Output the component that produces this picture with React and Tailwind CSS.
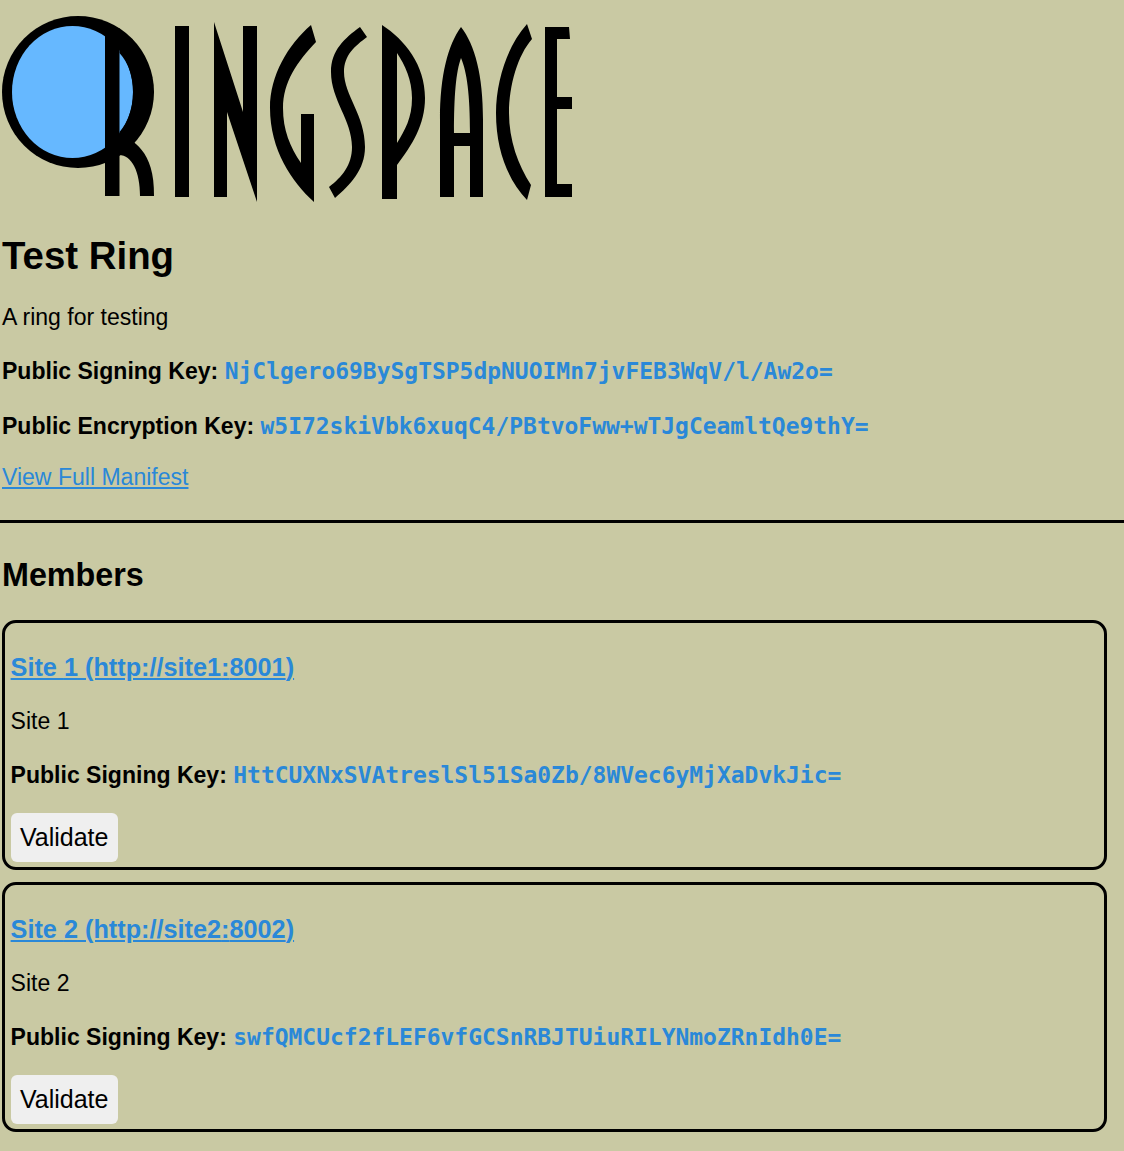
const mono = "font-['DejaVu_Sans_Mono',monospace] text-[22.96px] font-bold text-[#2a88d8]";
const link = "text-[#2a88d8] underline";

function Logo() {
  return (
    <svg width="575" height="205" viewBox="0 0 575 205" className="block">
      <ellipse cx="78" cy="92" rx="76" ry="76" fill="#000" />
      <ellipse cx="72.5" cy="92" rx="60.5" ry="66" fill="#66b8ff" />
      <path d="M105 28 L119.500 28 L119.500 196 L105 196 Z" fill="#000" />
      <path d="M119 133 C132 140 155 150 154 196 L140 196 C140 172 132 155 119 155 Z" fill="#000" />
      <path d="M119.500 30 L133 40 L154 92 L133 146 L119.500 140 L119.500 132 Q133 116 133 92 Q133 68 119.500 53 Z" fill="#000" />
      <path d="M175 26 H189 V197 H175 Z" fill="#000" />
      <path d="M214 22 L243 112 L243 26 L257 26 L257 202 L227 112 L227 197 L214 197 Z" fill="#000" />
      <path d="M311 25 L316 42 C297 62 283 82 283 108 C283 130 290 147 301 163 L301 114 L314 114 L314 202 C292 182 270 150 270 108 C270 75 288 45 311 25 Z" fill="#000" />
      <path d="M360 27 L367 37 C355 46 344 55 344 72 C344 95 365 115 365 147 C365 170 350 185 335 198 L329 187 C342 177 352 165 352 147 C352 120 331 100 331 72 C331 50 345 38 360 27 Z" fill="#000" />
      <path fillRule="evenodd" d="M382 25 C405 40 425 65 425 98 C425 125 412 145 397 165 L397 199 L382 199 Z M397 53 L397 143 C405 130 412 118 412 98 C412 80 405 65 397 53 Z" fill="#000" />
      <path d="M461 27 C475 45 483 75 483 120 L483 197 L470 197 L470 146 L454 146 L454 197 L440 197 L440 120 C440 75 448 45 461 27 Z M461 58 C456 72 454 95 454 133 L470 133 C470 95 467 72 461 58 Z" fillRule="evenodd" fill="#000" />
      <path d="M527 24 L532 39 C518 55 509 85 509 113 C509 140 518 165 531 185 L527 200 C508 180 496 150 496 113 C496 80 508 45 527 24 Z" fill="#000" />
      <path d="M545 27 H569 L570 39 H557 V97 H572 V109 H557 V184 H572 V197 H545 Z" fill="#000" />
    </svg>
  );
}

function Member({ n, port, k }) {
  return (
    <div className="rounded-[14px] border-[3px] border-black px-[5.6px] w-[1105px] h-[250px] pt-[30px]">
      <h3 className="text-[25.250px] leading-[29px] font-bold">
        <a className={link} href="#">Site {n} (http://site{n}:{port})</a>
      </h3>
      <p className="mt-[24px] leading-[30px]">Site {n}</p>
      <p className="mt-[24px] leading-[30px]"><b>Public Signing Key:</b> <code className={mono}>{k}</code></p>
      <button className="mt-[23px] block h-[49px] rounded-[6px] bg-[#efefef] px-[9.4px] text-[25px] text-black">Validate</button>
    </div>
  );
}

export default function App() {
  return (
    <div className="min-h-[1151px] bg-[#c9c9a3] font-['Liberation_Sans',sans-serif] text-[23.04px] text-black overflow-hidden">
      <Logo />
      <div className="pl-[2px]">
        <h1 className="text-[38.400px] leading-[44px] font-bold mt-[29px]">Test Ring</h1>
        <p className="mt-[24px] leading-[30px]">A ring for testing</p>
        <p className="mt-[24px] leading-[30px]"><b>Public Signing Key:</b> <code className={mono}>NjClgero69BySgTSP5dpNUOIMn7jvFEB3WqV/l/Aw2o=</code></p>
        <p className="mt-[25px] leading-[30px]"><b>Public Encryption Key:</b> <code className={mono}>w5I72skiVbk6xuqC4/PBtvoFww+wTJgCeamltQe9thY=</code></p>
        <p className="mt-[21px] leading-[30px]"><a className={link} href="#">View Full Manifest</a></p>
      </div>
      <hr className="mt-[28px] border-t-[3px] border-black" />
      <div className="pl-[2px]">
        <h2 className="mt-[33px] text-[32.300px] leading-[38px] font-bold">Members</h2>
        <div className="mt-[26px] flex flex-col gap-[12px]">
          <Member n={1} port={8001} k="HttCUXNxSVAtreslSl51Sa0Zb/8WVec6yMjXaDvkJic=" />
          <Member n={2} port={8002} k="swfQMCUcf2fLEF6vfGCSnRBJTUiuRILYNmoZRnIdh0E=" />
        </div>
      </div>
    </div>
  );
}
